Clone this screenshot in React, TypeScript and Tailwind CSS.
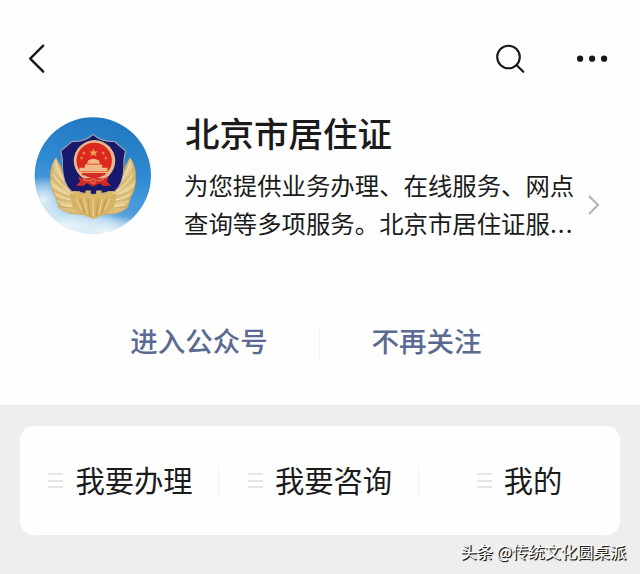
const menuItems = ["我要办理", "我要咨询", "我的"];

// Feathers of the left wing, mirrored for the right one
const feathers = [
  "M78 136 C66 150 66 170 76 190 L118 240 L122 216 Q96 190 78 136Z",
  "M68 168 C56 188 66 216 118 250 L126 226 Q86 206 68 168Z",
  "M62 198 C56 224 78 248 132 266 L138 240 Q88 228 62 198Z",
  "M68 230 C66 252 92 272 150 282 L154 254 Q96 250 68 230Z",
  "M78 260 C86 284 120 292 172 292 L172 264 Q116 272 78 260Z",
  "M84 282 C100 304 140 308 186 302 L186 280 Q130 290 84 282Z",
];

function Wing() {
  return (
    <g strokeLinejoin="round">
      <path d="M78 136 C60 160 58 186 62 202 C60 220 64 236 74 250 L80 270 L86 286 L120 304 L189 308 V240 H126 L104 206 L92 160Z" fill="#d6b26a" />
      {feathers.map((d, i) => (
        <path key={d} d={d} fill={i % 2 ? "#dcbd78" : "#e3ca8c"} stroke="#c39c56" strokeWidth="1.2" />
      ))}
      <path d="M78 152 Q86 184 108 212 M70 186 Q90 218 118 236 M68 216 Q96 242 134 252 M76 244 Q110 264 150 266 M92 276 Q130 284 164 278" stroke="#eedca8" strokeWidth="4" fill="none" />
    </g>
  );
}

function Emblem() {
  return (
    <svg viewBox="12 14 350 350" className="h-[117px] w-[117px] shrink-0" aria-hidden="true">
      <defs>
        <linearGradient id="sky" x1="0.6" y1="0" x2="0.4" y2="1">
          <stop offset="0" stopColor="#1f78c0" />
          <stop offset="0.45" stopColor="#318bd2" />
          <stop offset="0.75" stopColor="#4f9edb" />
          <stop offset="1" stopColor="#b4d8ef" />
        </linearGradient>
        <radialGradient id="cloud">
          <stop offset="0" stopColor="#eff7fb" stopOpacity="0.95" />
          <stop offset="0.5" stopColor="#e3f1f9" stopOpacity="0.6" />
          <stop offset="1" stopColor="#fff" stopOpacity="0" />
        </radialGradient>
        <clipPath id="disc">
          <circle cx="188" cy="189" r="174" />
        </clipPath>
      </defs>
      <g clipPath="url(#disc)">
        <rect x="12" y="14" width="352" height="350" fill="url(#sky)" />
        <ellipse cx="40" cy="262" rx="80" ry="70" fill="url(#cloud)" />
        <ellipse cx="110" cy="338" rx="160" ry="74" fill="url(#cloud)" />
        <ellipse cx="228" cy="356" rx="120" ry="50" fill="url(#cloud)" />
        <Wing />
        <g transform="translate(377 0) scale(-1 1)">
          <Wing />
        </g>
        <path d="M118 244 L260 244 L250 284 L222 306 L189 319 L156 306 L128 284Z" fill="#d6b265" />
        <path d="M148 256 L164 300 M172 252 L180 312 M206 252 L198 312 M230 256 L214 300" stroke="#b89048" strokeWidth="2.5" fill="none" />
        <path d="M138 258 L154 292 M160 254 L172 304 M189 254 V312 M218 254 L206 304 M240 258 L224 292" stroke="#e8d08d" strokeWidth="4" fill="none" />
        <path
          d="M189 66 Q164 90 126 87 L92 116 Q98 134 97 160 Q98 214 124 236 L189 246 L254 236 Q280 214 281 160 Q280 134 286 116 L252 87 Q214 90 189 66Z"
          fill="#18186c"
          stroke="#b3a6a4"
          strokeWidth="3"
          strokeLinejoin="round"
        />
        <path d="M130 236 H150 V246 H166 V234 H182 V246 H198 V234 H214 V246 H230 V236 H248 L240 258 H138Z" fill="#dcb966" />
        <circle cx="193" cy="145" r="62" fill="#e6b88e" />
        <circle cx="192" cy="144" r="53" fill="#dc291f" />
        <path d="M190 108 l3.5 9 h9.5 l-7.5 6 l3 9 l-8.5 -5.5 l-8.5 5.5 l3 -9 l-7.5 -6 h9.5Z" fill="#f0a257" />
        <g fill="#ea8348">
          <circle cx="161" cy="122" r="4" />
          <circle cx="154" cy="137" r="4" />
          <circle cx="219" cy="122" r="4" />
          <circle cx="227" cy="137" r="4" />
        </g>
        <path d="M174 144 Q190 134 206 144 L210 154 H170Z M164 156 H216 V166 H232 V177 H148 V166 H164Z" fill="#f1b988" />
        <path d="M150 180 H232" stroke="#f1b56b" strokeWidth="3" />
        <path d="M156 186 H224" stroke="#c9352a" strokeWidth="5" />
        <path d="M144 192 Q166 204 189 192 Q212 204 236 192 L230 206 L242 220 H218 L208 212 L189 222 L170 212 L160 220 H138 L150 206Z" fill="#d42a26" />
        <path d="M158 200 Q172 209 189 200 Q206 209 222 200" stroke="#e27f50" strokeWidth="3" fill="none" />
        <circle cx="189" cy="206" r="8" fill="#dc4331" stroke="#e27f50" strokeWidth="2" />
      </g>
    </svg>
  );
}

function TopBar() {
  return (
    <header className="flex h-[117px] items-start justify-between pt-11 pr-[32px] pl-[28px] text-[#171717]">
      <button type="button" aria-label="返回">
        <svg width="17" height="30" viewBox="0 0 17 30" fill="none" stroke="currentColor" strokeWidth="2.4" strokeLinecap="round" strokeLinejoin="round">
          <path d="M15.2 1.7 L2.2 14.7 L15.2 27.7" />
        </svg>
      </button>
      <div className="flex gap-[51px]">
        <button type="button" aria-label="搜索">
          <svg width="30" height="30" viewBox="0 0 30 30" fill="none" stroke="currentColor" strokeWidth="2.1" strokeLinecap="round">
            <circle cx="13.5" cy="13" r="11.3" />
            <path d="M21.7 21.2 L28.3 27.8" />
          </svg>
        </button>
        <button type="button" aria-label="更多">
          <svg width="32" height="30" viewBox="0 0 32 30" fill="currentColor">
            <circle cx="4.1" cy="14.7" r="3.1" />
            <circle cx="16.1" cy="14.7" r="3.1" />
            <circle cx="28.1" cy="14.7" r="3.1" />
          </svg>
        </button>
      </div>
    </header>
  );
}

function Profile() {
  return (
    <section className="flex h-[193px] items-start pl-[34px]">
      <Emblem />
      <div className="ml-[33px] w-[392px] shrink-0 text-[#1b1b1b]">
        <h1 className="-mt-[4px] pl-px text-[34.5px] leading-[38px] font-medium">北京市居住证</h1>
        <p className="mt-[15px] text-[24.4px] leading-[38px] whitespace-nowrap">
          为您提供业务办理、在线服务、网点
          <br />
          查询等多项服务。北京市居住证服<span className="tracking-[1.2px]">...</span>
        </p>
      </div>
      <svg className="mt-[77px] ml-[11px]" width="13" height="22" viewBox="0 0 13 22" fill="none" stroke="#b5b5b5" strokeWidth="2.2">
        <path d="M2 2 L11 11 L2 20" />
      </svg>
    </section>
  );
}

function Actions() {
  return (
    <div className="flex h-[95px] items-start pt-[10px] text-[27.5px] leading-10 text-[#5b6a91]">
      <button type="button" className="w-[319px] pl-[79px] text-center font-medium">进入公众号</button>
      <span className="mt-[6px] h-[34px] w-px bg-[#f2f2f2]" />
      <button type="button" className="w-[320px] pr-[107px] text-center font-medium">不再关注</button>
    </div>
  );
}

function MenuIcon() {
  return (
    <span className="flex w-[15px] flex-col gap-[4.5px]">
      <span className="h-[2px] bg-[#e6e6e6]" />
      <span className="h-[2px] bg-[#e6e6e6]" />
      <span className="h-[2px] bg-[#e6e6e6]" />
    </span>
  );
}

export default function App() {
  return (
    <main className="flex h-[574px] w-[640px] flex-col overflow-hidden bg-[#fefefe] font-['Noto_Sans_CJK_SC',sans-serif]">
      <TopBar />
      <Profile />
      <Actions />
      <section className="flex-1 bg-[#eeeeee] px-5 pt-[21px]">
        <nav className="grid h-[109px] grid-cols-[199px_200px_201px] items-center rounded-[14px] bg-[#fefefe] text-[29.3px] text-[#1b1b1b]">
          {menuItems.map((label, i) => (
            <div
              key={label}
              className={`flex h-7 items-center justify-center gap-3 ${i < menuItems.length - 1 ? "border-r border-[#f2f2f2] pl-[3px]" : ""}`}
            >
              <MenuIcon />
              <span className="-mt-px">{label}</span>
            </div>
          ))}
        </nav>
        <p className="mt-[4px] -mr-[6px] text-right text-[16.3px] leading-6 text-white [text-shadow:1px_1px_0_#222,1px_1px_1px_#000]">头条 @传统文化圆桌派</p>
      </section>
    </main>
  );
}
